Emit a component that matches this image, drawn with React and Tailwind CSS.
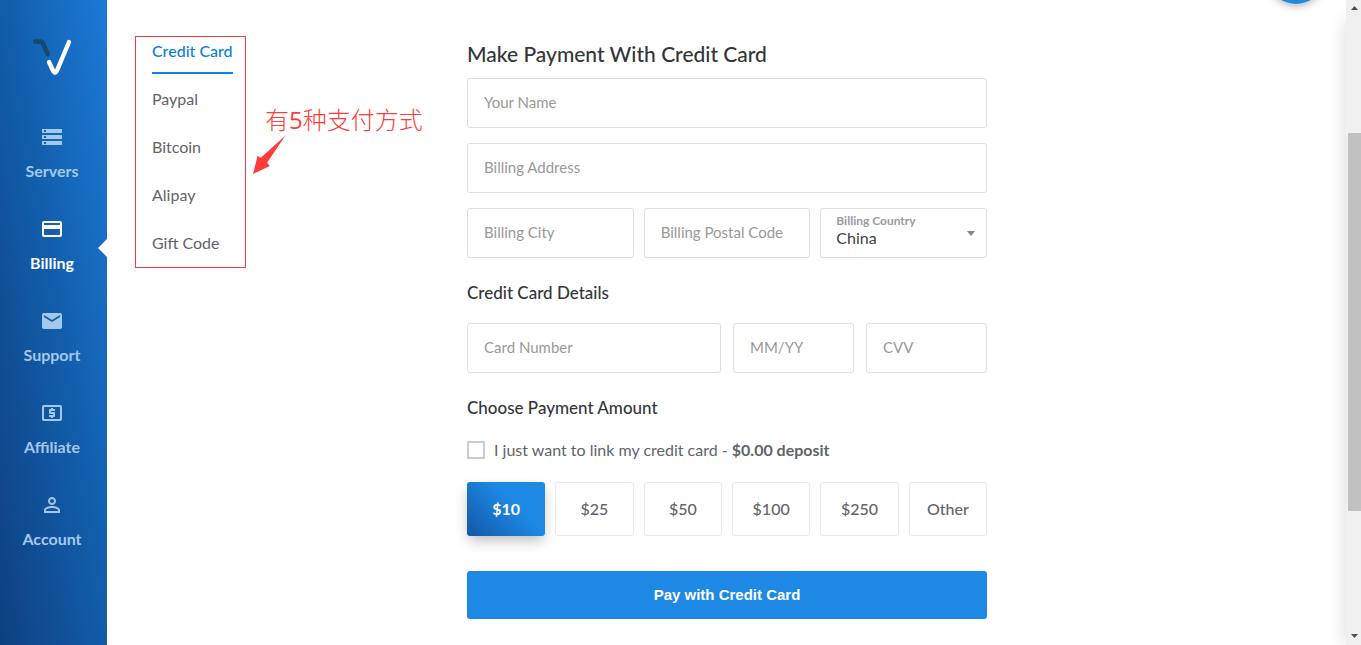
import React, { useState } from "react";
import { MdStorage, MdPayment, MdEmail, MdLocalAtm, MdPermIdentity } from "react-icons/md";

const NAV = [
  { label: "Servers", Icon: MdStorage },
  { label: "Billing", Icon: MdPayment, active: true },
  { label: "Support", Icon: MdEmail },
  { label: "Affiliate", Icon: MdLocalAtm },
  { label: "Account", Icon: MdPermIdentity },
];

const METHODS = ["Credit Card", "Paypal", "Bitcoin", "Alipay", "Gift Code"];
const AMOUNTS = ["$10", "$25", "$50", "$100", "$250", "Other"];

function Logo() {
  return (
    <svg width="40" height="38" viewBox="0 0 40 38" fill="none" strokeLinecap="round" strokeLinejoin="round" aria-hidden="true">
      <path d="M3.2 3.6H8.8Q10.2 3.6 10.8 5L15.6 16" stroke="#124a70" strokeWidth="4.6" />
      <path d="M17 24L21.2 33Q23 36.4 24.8 33L37 4" stroke="#fff" strokeWidth="4.4" />
    </svg>
  );
}

function Sidebar() {
  return (
    <nav className="relative w-[107px] shrink-0 bg-linear-to-tr from-[#0e4080] via-[#125ca9] to-[#1c7ad6] pr-[3px]">
      <a href="#home" aria-label="Home" className="flex justify-center pt-[38px]">
        <Logo />
      </a>
      <ul className="mt-[37px] flex flex-col">
        {NAV.map(({ label, Icon, active }) => (
          <li key={label} className="relative h-[92px]">
            <a
              href={"#" + label.toLowerCase()}
              className={
                "flex flex-col items-center gap-[11px] pt-3 text-base leading-[22px] font-bold " +
                (active ? "text-white" : "text-[#a3c8ee]")
              }
            >
              <Icon size={24} />
              {label}
            </a>
            {active && (
              <svg className="absolute top-[34px] -right-[3px]" width="9" height="18" viewBox="0 0 9 18" aria-hidden="true">
                <path d="M9 0V18L0 9Z" fill="#fff" />
              </svg>
            )}
          </li>
        ))}
      </ul>
    </nav>
  );
}

function Methods() {
  return (
    <div className="relative pt-9 pl-7">
      <ul className="flex h-[232px] w-[111px] flex-col gap-[11px] border border-[#f93b3b] px-[15px] pl-4">
        {METHODS.map((m, i) => (
          <li key={m}>
            <a
              href={"#" + m.toLowerCase().replace(" ", "-")}
              className={
                "inline-block border-b-2 pb-[7px] text-base leading-7 whitespace-nowrap " +
                (i === 0 ? "border-[#0a84e0] font-medium text-[#0a7fdc]" : "border-transparent text-[#626468]")
              }
            >
              {m}
            </a>
          </li>
        ))}
      </ul>
      <p className="absolute top-[103px] left-[158px] font-['Noto_Sans_CJK_SC',sans-serif] text-2xl leading-8 font-light whitespace-nowrap text-[#ff3b3b]">
        有<span className="font-['Open_Sans',sans-serif] font-medium">5</span>种支付方式
      </p>
      <svg className="absolute top-[135px] left-[145px]" width="34" height="40" viewBox="0 0 34 40" aria-hidden="true">
        <path d="M33.5 0.5L15.2 27.4L17.8 31L1 39L5.6 20.8L8.8 22.8Z" fill="#ff3b3b" />
      </svg>
    </div>
  );
}

function Field({ label }) {
  return (
    <input
      type="text"
      aria-label={label}
      placeholder={label}
      className="h-[50px] w-full min-w-0 rounded-[3px] border border-[#dcdee0] bg-white px-4 pb-[2px] text-[15px] text-[#3c3f43] outline-none placeholder:text-[#999]"
    />
  );
}

function CountrySelect() {
  return (
    <div className="relative">
      <label htmlFor="country" className="absolute top-[6px] left-4 text-xs leading-[14px] font-bold text-[#999ba0]">
        Billing Country
      </label>
      <select
        id="country"
        className="h-[50px] w-full appearance-none rounded-[3px] border border-[#dcdee0] bg-transparent px-[15px] pt-[10px] text-base text-[#3c3f43] outline-none"
      >
        <option>China</option>
      </select>
      <svg className="pointer-events-none absolute top-[23px] right-3" width="8" height="5" viewBox="0 0 8 5" aria-hidden="true">
        <path d="M0 0H8L4 5Z" fill="#808488" />
      </svg>
    </div>
  );
}

function PaymentForm() {
  const [amount, setAmount] = useState("$10");
  return (
    <form className="pt-10 pb-[26px]" onSubmit={(e) => e.preventDefault()}>
      <h1 className="mb-[10px] text-[21px] leading-7 font-medium text-[#333639]">Make Payment With Credit Card</h1>
      <div className="flex flex-col gap-[15px]">
        <Field label="Your Name" />
        <Field label="Billing Address" />
        <div className="grid grid-cols-3 gap-[10px]">
          <Field label="Billing City" />
          <Field label="Billing Postal Code" />
          <CountrySelect />
        </div>
      </div>

      <h2 className="mt-[23px] mb-[18px] text-[17px] leading-6 font-medium text-[#333639]">Credit Card Details</h2>
      <div className="grid grid-cols-[254fr_121fr_121fr] gap-3">
        <Field label="Card Number" />
        <Field label="MM/YY" />
        <Field label="CVV" />
      </div>

      <h2 className="mt-[23px] text-[17px] leading-6 font-medium text-[#333639]">Choose Payment Amount</h2>
      <label className="mt-5 flex items-center gap-[9px] text-base leading-5 text-[#626468]">
        <input type="checkbox" className="size-[18px] shrink-0 appearance-none border-2 border-[#c9cbd3] bg-white checked:bg-[#1e88e5]" />
        <span>
          I just want to link my credit card - <strong className="font-bold">$0.00 deposit</strong>
        </span>
      </label>

      <div className="mt-[22px] grid grid-cols-6 gap-[10px]">
        {AMOUNTS.map((a) => (
          <button
            key={a}
            type="button"
            onClick={() => setAmount(a)}
            className={
              "h-[54px] rounded-[3px] text-base " +
              (a === amount
                ? "bg-linear-[45deg,#1258a6_0%,#1e88e5_60%,#1e88e5_100%] font-bold text-white shadow-[0_6px_14px_-2px_rgba(0,0,0,0.28)]"
                : "border border-[#e6e8ea] bg-white font-medium text-[#626468]")
            }
          >
            {a}
          </button>
        ))}
      </div>

      <button
        type="submit"
        className="mt-[35px] h-12 w-full rounded-[3px] bg-[#1e88e5] font-['Liberation_Sans',Arial,sans-serif] text-[15px] font-bold text-white"
      >
        Pay with Credit Card
      </button>
    </form>
  );
}

function ScrollRail() {
  return (
    <div className="flex w-[15px] shrink-0 flex-col items-center bg-[#f0f0f0]" aria-hidden="true">
      <svg className="mt-[6px] ml-[2px]" width="7" height="4" viewBox="0 0 7 4">
        <path d="M0 4L3.5 0L7 4Z" fill="#505050" />
      </svg>
      <div className="flex w-full flex-1 flex-col pl-[2px]">
        <div className="flex-[123]" />
        <div className="flex-[378] bg-[#c1c1c1]" />
        <div className="flex-[123]" />
      </div>
      <svg className="mb-[7px] ml-[2px]" width="7" height="4" viewBox="0 0 7 4">
        <path d="M0 0L3.5 4L7 0Z" fill="#505050" />
      </svg>
    </div>
  );
}

export default function App() {
  return (
    <div className="flex min-h-screen bg-white font-[Lato,sans-serif]">
      <Sidebar />
      <main className="relative grid flex-1 grid-cols-[minmax(0,360px)_minmax(0,520px)_1fr] items-start overflow-hidden">
        <Methods />
        <PaymentForm />
        <button
          type="button"
          aria-label="Add"
          className="absolute -top-[52px] right-[22px] size-14 rounded-full bg-[#1e88e5] shadow-[0_2px_8px_rgba(0,0,0,0.3)]"
        />
        <div className="absolute top-5 -right-4 bottom-0 w-4 shadow-[0_0_18px_rgba(0,0,0,0.16)]" />
      </main>
      <ScrollRail />
    </div>
  );
}
